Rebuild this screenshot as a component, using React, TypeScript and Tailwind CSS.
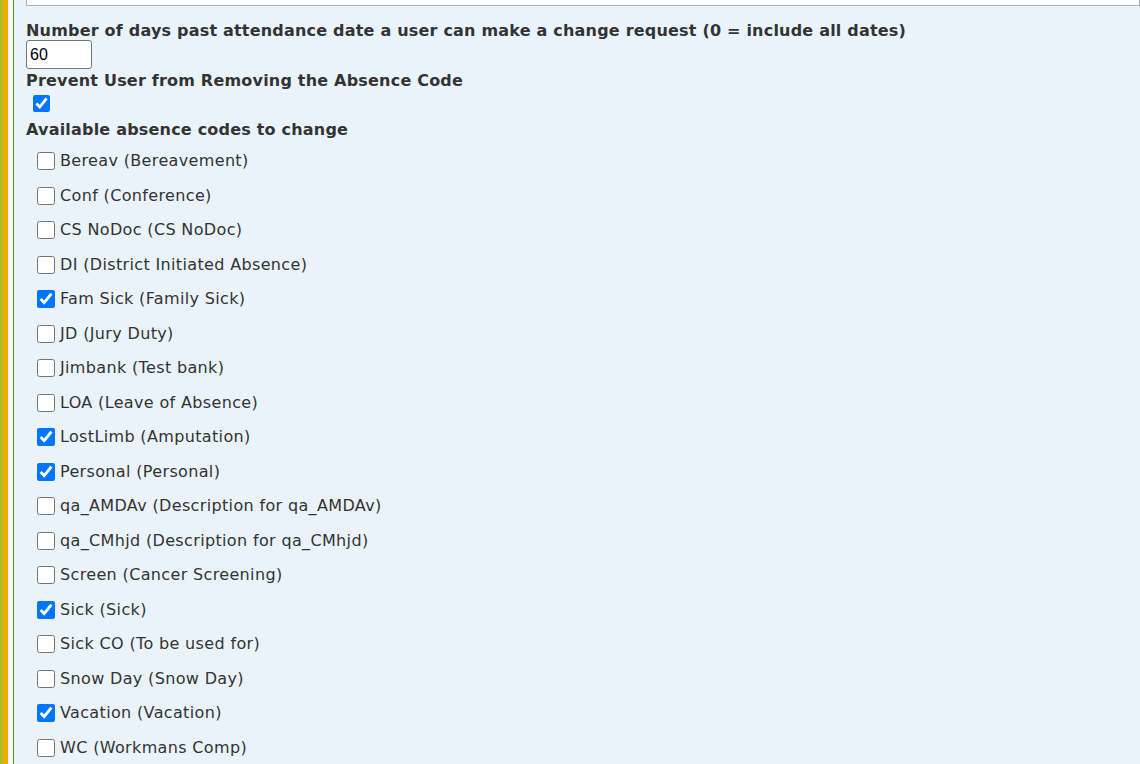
import React from "react";

const codes: [string, boolean][] = [
  ["Bereav (Bereavement)", false],
  ["Conf (Conference)", false],
  ["CS NoDoc (CS NoDoc)", false],
  ["DI (District Initiated Absence)", false],
  ["Fam Sick (Family Sick)", true],
  ["JD (Jury Duty)", false],
  ["Jimbank (Test bank)", false],
  ["LOA (Leave of Absence)", false],
  ["LostLimb (Amputation)", true],
  ["Personal (Personal)", true],
  ["qa_AMDAv (Description for qa_AMDAv)", false],
  ["qa_CMhjd (Description for qa_CMhjd)", false],
  ["Screen (Cancer Screening)", false],
  ["Sick (Sick)", true],
  ["Sick CO (To be used for)", false],
  ["Snow Day (Snow Day)", false],
  ["Vacation (Vacation)", true],
  ["WC (Workmans Comp)", false],
];

export default function App() {
  return (
    <div className="flex h-[764px] overflow-hidden">
      <div className="w-[3px] bg-[#a8c424]" />
      <div className="w-[5px] bg-[#ffa500]" />
      <div className="w-[5px] bg-white" />
      <div className="w-[1px] bg-[#4f9a1e]" />
      <div className="flex-1 bg-[#ebf3fa] pl-[12px] font-['DejaVu_Sans',sans-serif] text-[#333]">
        <div className="h-[6px] border border-t-0 border-[#b0b0b0] bg-white" />
        <div className="mt-[16px] text-[16px] font-bold leading-[18px] tracking-[0.2px]">
          Number of days past attendance date a user can make a change request (0 = include all dates)
        </div>
        <input
          defaultValue="60"
          className="mt-0 block h-[29px] w-[66px] rounded-[3px] border border-[#767676] bg-white px-[3px] font-['Liberation_Sans',sans-serif] text-[16px] text-black"
        />
        <div className="mt-[3px] text-[16px] font-bold leading-[18px] tracking-[0.2px]">Prevent User from Removing the Absence Code</div>
        <div className="mt-[5px] ml-[7px] flex h-[17px]">
          <input type="checkbox" defaultChecked className="m-0 h-[17px] w-[17px]" />
        </div>
        <div className="mt-[9px] text-[16px] font-bold leading-[18px] tracking-[0.2px]">Available absence codes to change</div>
        <div className="mt-[5px] flex flex-col">
          {codes.map(([label, checked]) => (
            <label key={label} className="flex h-[34.5px] items-center pl-[11px] text-[16px] tracking-[0.35px]">
              <input type="checkbox" defaultChecked={checked} className="m-0 mr-[5px] h-[18px] w-[18px]" />
              <span>{label}</span>
            </label>
          ))}
        </div>
      </div>
    </div>
  );
}
